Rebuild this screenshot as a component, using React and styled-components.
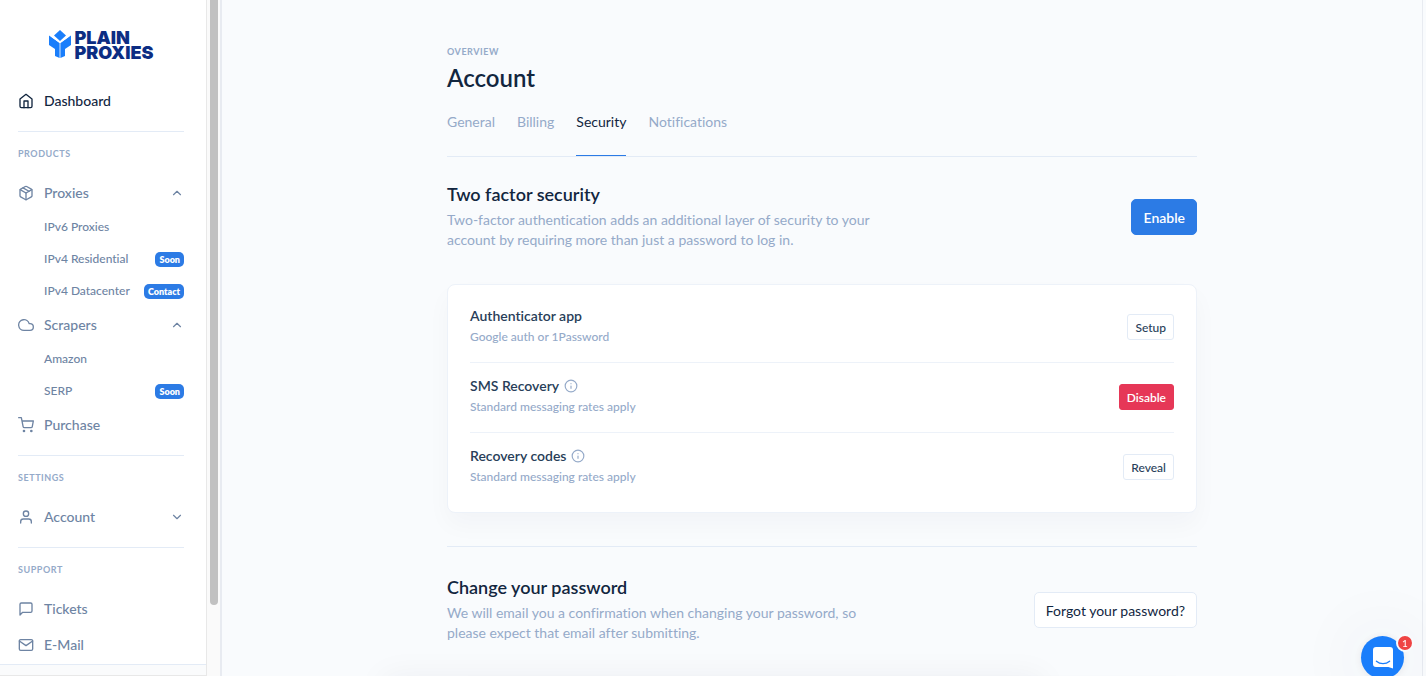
import React, { Component } from 'react';
import styled, { createGlobalStyle, ThemeProvider } from 'styled-components';
import {
  FiHome,
  FiPackage,
  FiCloud,
  FiShoppingCart,
  FiUser,
  FiMessageSquare,
  FiMail,
  FiChevronUp,
  FiChevronDown,
  FiInfo,
} from 'react-icons/fi';

const theme = {
  primary: '#2c7be5',
  danger: '#e63757',
  dark: '#12263f',
  heading: '#283e59',
  nav: '#6e84a3',
  muted: '#95aac9',
  border: '#e3ebf6',
  borderLight: '#edf2f9',
  background: '#f9fbfd',
};

const proxies = [
  { label: 'IPv6 Proxies' },
  { label: 'IPv4 Residential', badge: 'Soon' },
  { label: 'IPv4 Datacenter', badge: 'Contact' },
];

const scrapers = [{ label: 'Amazon' }, { label: 'SERP', badge: 'Soon' }];

const tabs = ['General', 'Billing', 'Security', 'Notifications'];

const methods = [
  { title: 'Authenticator app', note: 'Google auth or 1Password', action: 'Setup' },
  { title: 'SMS Recovery', note: 'Standard messaging rates apply', action: 'Disable', info: true, danger: true },
  { title: 'Recovery codes', note: 'Standard messaging rates apply', action: 'Reveal', info: true },
];

const Brand = () => (
  <BrandLink href="#">
    <svg width="22" height="28" viewBox="0 0 22 28" fill="#1a7efb">
      <path d="M11 0 17 5.5 11 11 5 5.5z" />
      <path d="M0 5.5 10.6 13V28L6 26V19L0 15z" />
      <path d="M22 5.5 11.4 13V28L16 26V19L22 15z" />
      <path d="M2.6 6.6 11 12.8 19.4 6.6" fill="none" stroke="#fff" strokeWidth="0.8" />
    </svg>
    <BrandName>Plain Proxies</BrandName>
  </BrandLink>
);

const NavItem = ({ icon: Icon, label, active, open, children }) => (
  <li>
    <NavLink href="#" $active={active}>
      <Icon size={16} />
      <NavLabel>{label}</NavLabel>
      {open === true && <FiChevronUp size={14} />}
      {open === false && <FiChevronDown size={14} />}
    </NavLink>
    {children}
  </li>
);

const SubNav = ({ items }) => (
  <NavList>
    {items.map(item => (
      <li key={item.label}>
        <SubLink href="#">
          {item.label}
          {item.badge && <Badge>{item.badge}</Badge>}
        </SubLink>
      </li>
    ))}
  </NavList>
);

class Sidebar extends Component {
  render() {
    return (
      <Side>
        <Panel>
          <Nav>
            <Brand />
            <NavList>
              <NavItem icon={FiHome} label="Dashboard" active />
            </NavList>
            <NavDivider />
            <NavHeading>Products</NavHeading>
            <NavList>
              <NavItem icon={FiPackage} label="Proxies" open>
                <SubNav items={proxies} />
              </NavItem>
              <NavItem icon={FiCloud} label="Scrapers" open>
                <SubNav items={scrapers} />
              </NavItem>
              <NavItem icon={FiShoppingCart} label="Purchase" />
            </NavList>
            <NavDivider />
            <NavHeading>Settings</NavHeading>
            <NavList>
              <NavItem icon={FiUser} label="Account" open={false} />
            </NavList>
            <NavDivider />
            <NavHeading>Support</NavHeading>
            <NavList>
              <NavItem icon={FiMessageSquare} label="Tickets" />
              <NavItem icon={FiMail} label="E-Mail" />
            </NavList>
          </Nav>
          <BottomTrack />
        </Panel>
        <Track>
          <Thumb />
        </Track>
      </Side>
    );
  }
}

const Messenger = () => (
  <Launcher aria-label="Open messenger, 1 unread">
    <svg width="20" height="22" viewBox="0 0 20 22">
      <path d="M3 0h14a3 3 0 0 1 3 3v18.6L15.4 20H3a3 3 0 0 1-3-3V3a3 3 0 0 1 3-3z" fill="#fff" />
      <path d="M3.4 14.2c3.8 3.2 9.4 3.2 13.2 0" fill="none" stroke="#1a7efb" strokeWidth="1.3" strokeLinecap="round" />
    </svg>
    <Unread>1</Unread>
  </Launcher>
);

export default class App extends Component {
  render() {
    return (
      <ThemeProvider theme={theme}>
        <GlobalStyle />
        <Shell>
          <Sidebar />
          <Main>
            <Container>
              <Pretitle>Overview</Pretitle>
              <Title>Account</Title>
              <Tabs>
                {tabs.map(tab => (
                  <Tab key={tab} href="#" $active={tab === 'Security'}>{tab}</Tab>
                ))}
              </Tabs>

              <SectionHead>
                <div>
                  <SectionTitle>Two factor security</SectionTitle>
                  <SectionText>
                    Two-factor authentication adds an additional layer of security to your account by requiring more than just a password to log in.
                  </SectionText>
                </div>
                <Button $primary>Enable</Button>
              </SectionHead>

              <Card>
                {methods.map(method => (
                  <Method key={method.title}>
                    <div>
                      <MethodTitle>
                        {method.title}
                        {method.info && <FiInfo size={14} />}
                      </MethodTitle>
                      <MethodNote>{method.note}</MethodNote>
                    </div>
                    <SmallButton $danger={method.danger}>{method.action}</SmallButton>
                  </Method>
                ))}
              </Card>

              <Divider />

              <SectionHead>
                <div>
                  <SectionTitle>Change your password</SectionTitle>
                  <SectionText>
                    We will email you a confirmation when changing your password, so please expect that email after submitting.
                  </SectionText>
                </div>
                <Button>Forgot your password?</Button>
              </SectionHead>

              <Card />
            </Container>
          </Main>
          <Toast />
          <Messenger />
        </Shell>
      </ThemeProvider>
    );
  }
}

const GlobalStyle = createGlobalStyle`
  * {
    box-sizing: border-box;
  }
  body {
    margin: 0;
    font-family: Lato, "Liberation Sans", sans-serif;
    font-size: 14px;
    line-height: 20px;
    font-variant-ligatures: none;
    color: ${theme.dark};
    background-color: ${theme.background};
  }
  h1, h2, h3, p, ul {
    margin: 0;
    padding: 0;
  }
  ul {
    list-style: none;
  }
  a {
    color: inherit;
    text-decoration: none;
  }
  button {
    font-family: inherit;
    cursor: pointer;
  }
`;

const Shell = styled.div`
  display: flex;
  height: 100vh;
  overflow: hidden;
`;

const Side = styled.aside`
  display: flex;
  flex-shrink: 0;
`;

const Panel = styled.div`
  display: flex;
  flex-direction: column;
  width: 206px;
  background-color: #fff;
`;

const Nav = styled.nav`
  flex: 1;
  overflow: hidden;
  padding: 30px 22px 0 18px;
`;

const BottomTrack = styled.div`
  height: 12px;
  background-color: #fafbfc;
  border-top: 1px solid ${props => props.theme.border};
  border-bottom: 1px solid #e8e8e8;
`;

const Track = styled.div`
  width: 16px;
  padding: 0 3px;
  background-color: #fafafa;
  border-left: 1px solid #e8e8e8;
  border-right: 2px solid #e8ebf1;
`;

const Thumb = styled.div`
  width: 8px;
  height: 605px;
  border-radius: 0 0 4px 4px;
  background-color: #c1c1c1;
`;

const BrandLink = styled.a`
  display: flex;
  justify-content: center;
  gap: 4px;
  margin-bottom: 23px;
`;

const BrandName = styled.span`
  width: min-content;
  font-family: Inter, sans-serif;
  font-size: 18px;
  font-weight: 900;
  line-height: 15px;
  text-transform: uppercase;
  color: #0c2d83;
`;

const NavList = styled.ul`
  color: ${props => props.theme.nav};
`;

const NavLink = styled.a`
  display: flex;
  align-items: center;
  gap: 10px;
  height: 36px;
  color: ${props => (props.$active ? props.theme.dark : 'inherit')};
`;

const NavLabel = styled.span`
  flex: 1;
  font-weight: 500;
`;

const SubLink = styled.a`
  display: flex;
  align-items: center;
  justify-content: space-between;
  height: 32px;
  padding-left: 26px;
  font-size: 12px;
  font-weight: 500;
`;

const Badge = styled.span`
  padding: 0 4px;
  border-radius: 5px;
  font-size: 9px;
  font-weight: 800;
  line-height: 15px;
  color: #fff;
  background-color: ${props => props.theme.primary};
`;

const NavDivider = styled.hr`
  height: 1px;
  margin: 12px 0 0;
  border: 0;
  background-color: ${props => props.theme.border};
`;

const NavHeading = styled.h3`
  font-size: 9px;
  font-weight: 700;
  line-height: 43px;
  letter-spacing: 0.06em;
  text-transform: uppercase;
  color: ${props => props.theme.muted};
`;

const Main = styled.main`
  flex: 1;
  overflow: hidden;
  margin-right: 3px;
  border-right: 1px solid #e8ebf1;
`;

const Container = styled.div`
  max-width: 750px;
  margin: 0 auto;
  padding-top: 42px;
`;

const Pretitle = styled.p`
  font-size: 9px;
  font-weight: 700;
  letter-spacing: 0.06em;
  text-transform: uppercase;
  color: ${props => props.theme.muted};
`;

const Title = styled.h1`
  font-size: 24px;
  font-weight: 600;
  line-height: 32px;
`;

const Tabs = styled.nav`
  display: flex;
  gap: 22px;
  height: 63px;
  border-bottom: 1px solid ${props => props.theme.border};
`;

const Tab = styled.a`
  padding-top: 18px;
  color: ${props => (props.$active ? props.theme.dark : props.theme.muted)};
  border-bottom: 1px solid ${props => (props.$active ? props.theme.primary : 'transparent')};
`;

const SectionHead = styled.div`
  display: flex;
  align-items: center;
  justify-content: space-between;
  gap: 24px;
  padding: 27px 0 34px;
`;

const SectionTitle = styled.h2`
  margin-bottom: 6px;
  font-size: 18px;
  font-weight: 600;
`;

const SectionText = styled.p`
  max-width: 430px;
  color: ${props => props.theme.muted};
`;

const Button = styled.button`
  flex-shrink: 0;
  height: 36px;
  padding: 0 11px;
  border: 1px solid ${props => (props.$primary ? props.theme.primary : props.theme.border)};
  border-radius: 5px;
  font-size: 14px;
  font-weight: ${props => (props.$primary ? 600 : 400)};
  color: ${props => (props.$primary ? '#fff' : props.theme.dark)};
  background-color: ${props => (props.$primary ? props.theme.primary : '#fff')};
`;

const SmallButton = styled.button`
  height: 26px;
  padding: 0 7px;
  border: 1px solid ${props => (props.$danger ? props.theme.danger : props.theme.border)};
  border-radius: 3px;
  font-size: 12px;
  font-weight: ${props => (props.$danger ? 600 : 500)};
  color: ${props => (props.$danger ? '#fff' : props.theme.heading)};
  background-color: ${props => (props.$danger ? props.theme.danger : '#fff')};
`;

const Card = styled.div`
  min-height: 120px;
  padding: 8px 22px 10px;
  border: 1px solid ${props => props.theme.borderLight};
  border-radius: 8px;
  background-color: #fff;
  box-shadow: 0 12px 24px rgba(18, 38, 63, 0.03);
`;

const Method = styled.div`
  display: flex;
  align-items: center;
  justify-content: space-between;
  padding: 13px 0 14px;

  & + & {
    border-top: 1px solid ${props => props.theme.borderLight};
  }
`;

const MethodTitle = styled.h3`
  display: flex;
  align-items: center;
  gap: 5px;
  font-size: 14px;
  font-weight: 600;
  color: ${props => props.theme.heading};

  svg {
    color: ${props => props.theme.muted};
  }
`;

const MethodNote = styled.p`
  font-size: 12px;
  font-weight: 500;
  line-height: 22px;
  color: ${props => props.theme.muted};
`;

const Divider = styled.hr`
  height: 1px;
  margin: 33px 0 3px;
  border: 0;
  background-color: ${props => props.theme.border};
`;

/* waits below the bottom edge, only its shadow shows */
const Toast = styled.div`
  position: fixed;
  top: 100%;
  left: 50%;
  width: 660px;
  height: 60px;
  margin-left: -330px;
  box-shadow: 0 0 32px rgba(18, 38, 63, 0.05);
`;

const Launcher = styled.button`
  position: fixed;
  right: 22px;
  bottom: -3px;
  display: flex;
  align-items: center;
  justify-content: center;
  width: 43px;
  height: 43px;
  padding: 0;
  border: 0;
  border-radius: 50%;
  background-color: #1a7efb;
  box-shadow: 0 1px 6px rgba(18, 38, 63, 0.08), 0 2px 70px 10px rgba(18, 60, 80, 0.06);
`;

const Unread = styled.span`
  position: absolute;
  top: -2px;
  right: -10px;
  width: 18px;
  height: 18px;
  border: 2px solid ${props => props.theme.background};
  border-radius: 50%;
  font-size: 10px;
  line-height: 14px;
  text-align: center;
  color: #fff;
  background-color: #ef4444;
`;
